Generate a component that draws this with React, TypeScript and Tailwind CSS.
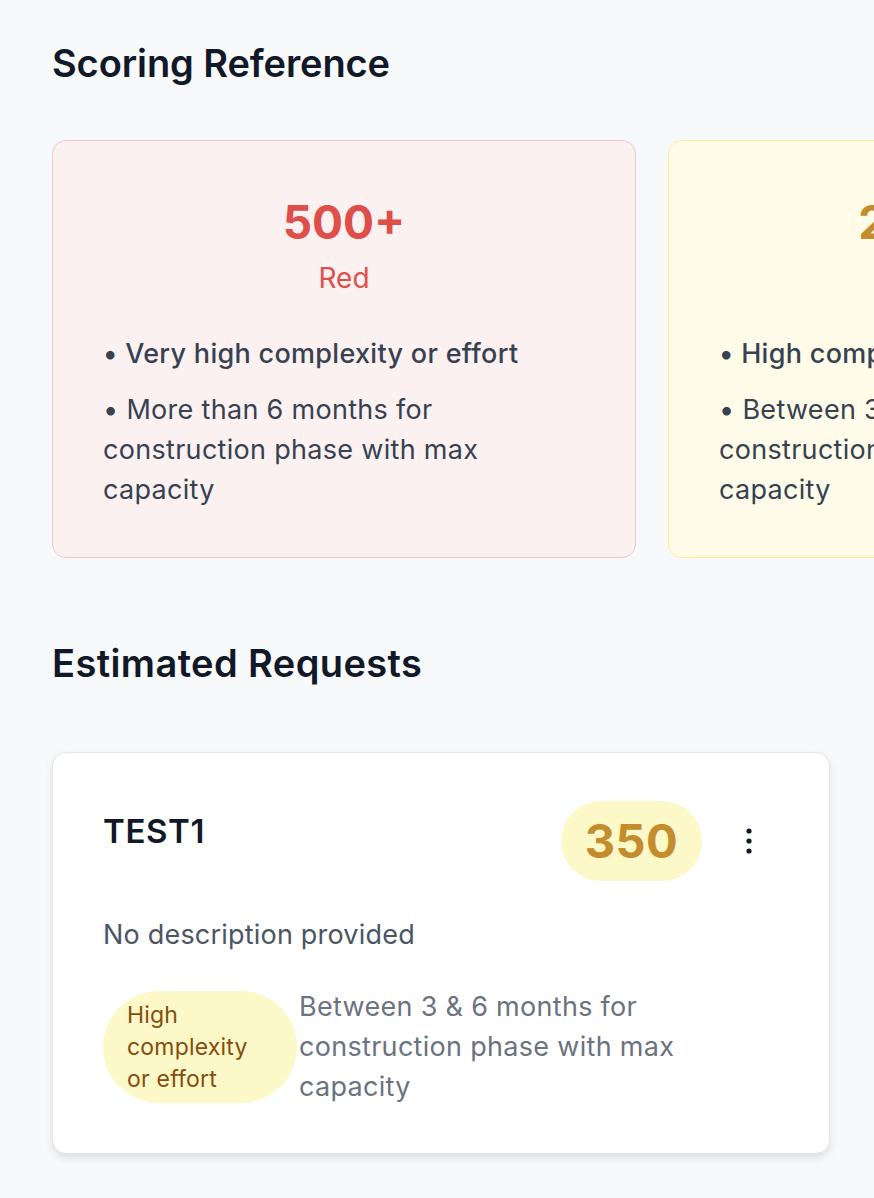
import React from "react";

const font = { fontFamily: "Inter, 'Noto Sans', sans-serif" };

function ScoreCard({
  score,
  label,
  bullets,
  cardCls,
  numCls,
}: {
  score: string;
  label: string;
  bullets: string[];
  cardCls: string;
  numCls: string;
}) {
  return (
    <div className={`w-[584px] shrink-0 rounded-[14px] border pt-[53px] pb-[47px] px-[50px] ${cardCls}`}>
      <div className={`text-center text-[46px] leading-[56px] font-bold ${numCls}`}>{score}</div>
      <div className={`mt-[10px] text-center text-[28px] leading-[36px] ${numCls}`}>{label}</div>
      <div className="mt-[38px] flex flex-col gap-[16px] text-[27px] leading-[40px] tracking-[0.3px] text-[#374151]">
        {bullets.map((b, i) => (
          <div key={i} className={i === 0 ? "font-medium" : ""}>
            • {b}
          </div>
        ))}
      </div>
    </div>
  );
}

export default function App() {
  return (
    <div style={font} className="min-h-[1198px] w-[874px] overflow-hidden bg-[#f8f9fb] px-[52px] pt-[39px]">
      <h1 className="text-[38px] leading-[48px] font-semibold text-[#111827] tracking-[-0.1px]">Scoring Reference</h1>
      <div className="mt-[53px] flex gap-[32px] overflow-hidden -mr-[52px]">
        <ScoreCard
          score="500+"
          label="Red"
          bullets={["Very high complexity or effort", "More than 6 months for construction phase with max capacity"]}
          cardCls="bg-[#fcf1f1] border-[#f4c6c5]"
          numCls="text-[#df4f4a]"
        />
        <ScoreCard
          score="200-499"
          label="Yellow"
          bullets={["High complexity or effort", "Between 3 & 6 months for construction phase with max capacity"]}
          cardCls="bg-[#fefce9] border-[#fbef96]"
          numCls="text-[#c38d2e]"
        />
      </div>
      <h2 className="mt-[81px] text-[38px] leading-[48px] font-semibold text-[#111827] tracking-[0.4px]">Estimated Requests</h2>
      <div className="mt-[65px] w-[778px] rounded-[14px] border border-[#e3e5e9] bg-white px-[50px] pt-[48px] pb-[46px] shadow-[0_4px_8px_rgba(0,0,0,0.1)]">
        <div className="flex items-start justify-between">
          <div className="mt-[11px] text-[33px] leading-[38px] font-semibold tracking-[0.6px] text-[#111827]">TEST1</div>
          <div className="flex items-center">
            <div className="flex h-[80px] w-[141px] items-center justify-center rounded-full bg-[#fdf8c7] text-[47px] font-bold tracking-[0.5px] text-[#c38d2e]">
              350
            </div>
            <div className="ml-[43px] mr-[26px] flex h-[28px] w-[8px] items-center justify-center">
              <svg width="8" height="28" viewBox="0 0 8 28" fill="#111827">
                <circle cx="4" cy="4" r="2.6" />
                <circle cx="4" cy="14" r="2.6" />
                <circle cx="4" cy="24" r="2.6" />
              </svg>
            </div>
          </div>
        </div>
        <div className="mt-[34px] text-[27px] leading-[40px] tracking-[0.2px] text-[#4b5563]">No description provided</div>
        <div className="mt-[32px] flex items-center">
          <div className="w-[194px] shrink-0 rounded-full bg-[#fdf8c7] px-[24px] py-[8px] text-[23px] leading-[32px] tracking-[0.2px] text-[#854d0e]">
            High complexity or effort
          </div>
          <div className="ml-[2px] w-[390px] text-[27px] leading-[40px] tracking-[0.3px] text-[#6b7280]">
            Between 3 &amp; 6 months for construction phase with max capacity
          </div>
        </div>
      </div>
    </div>
  );
}
